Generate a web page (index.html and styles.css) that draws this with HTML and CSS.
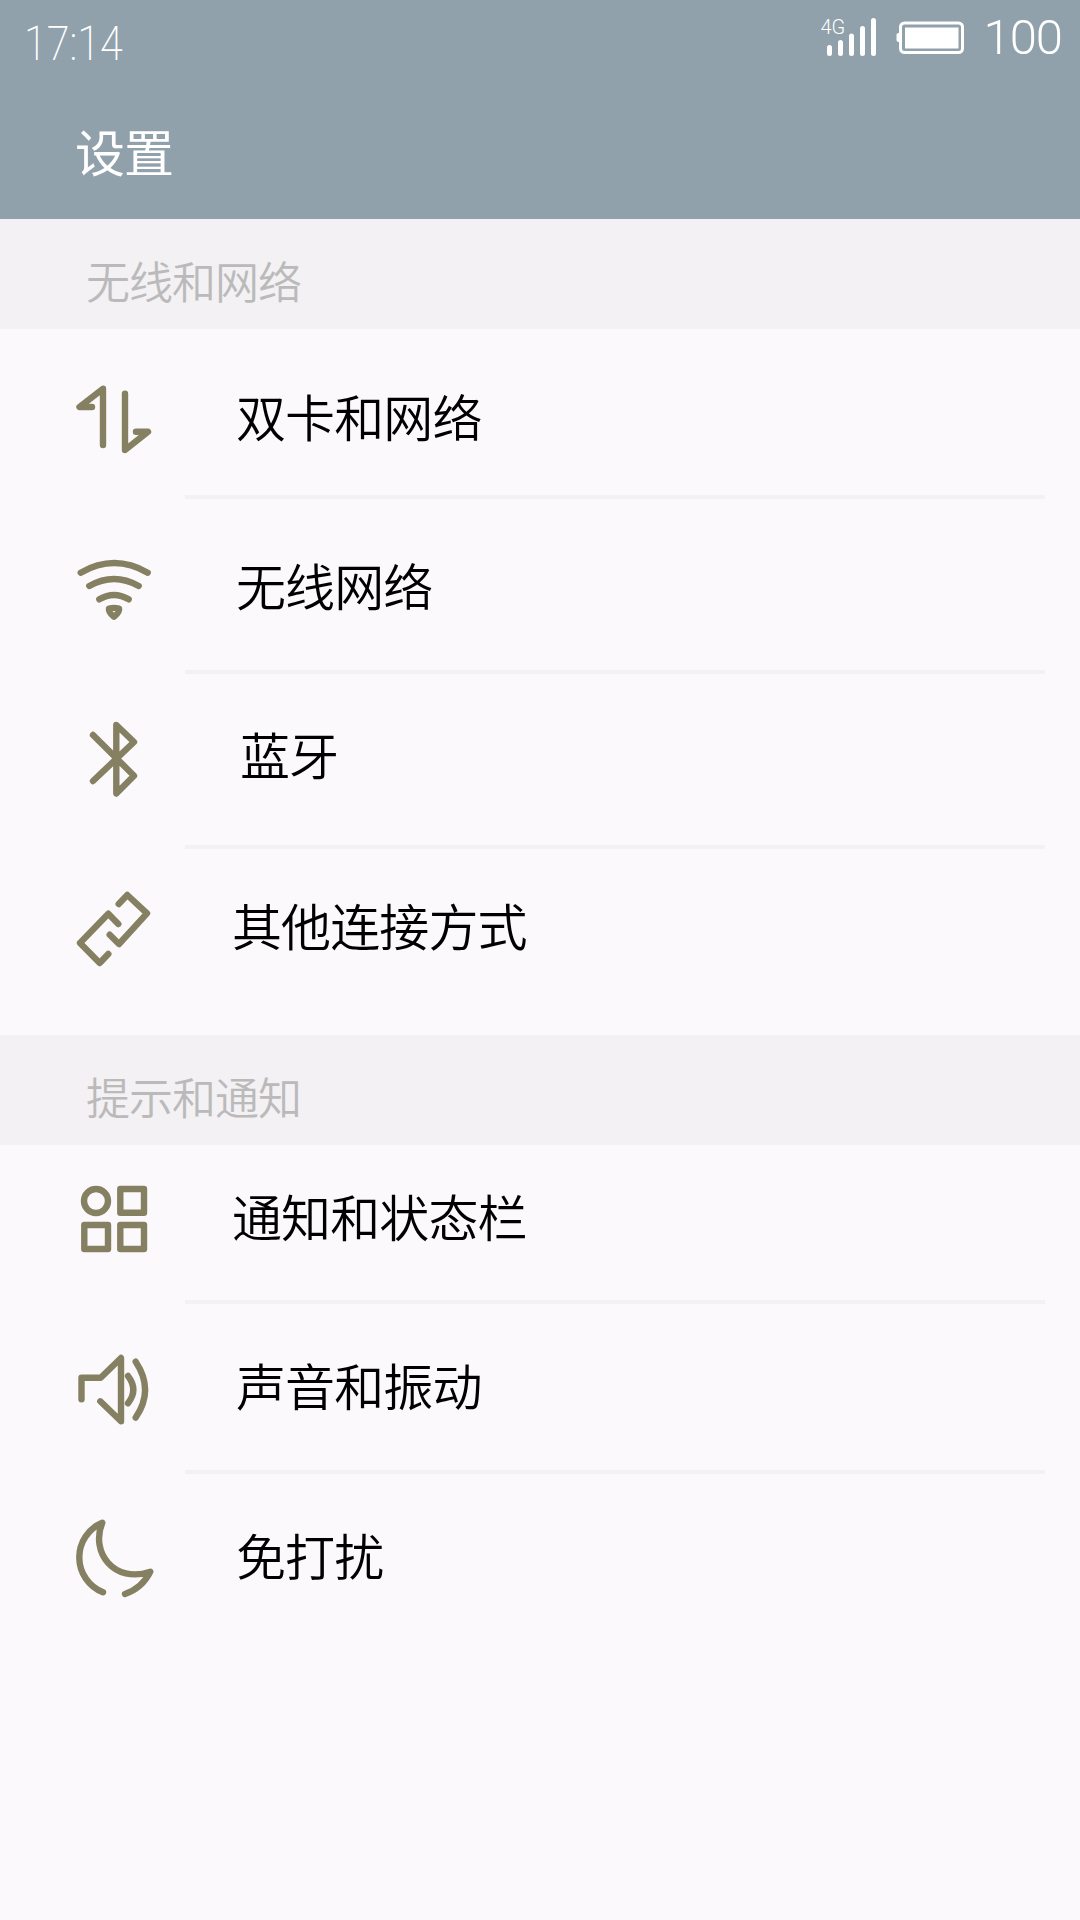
FILE: index.html
```html
<!DOCTYPE html>
<html lang="zh-CN">
<head>
  <meta charset="UTF-8">
  <meta name="viewport" content="width=device-width, initial-scale=1.0">
  <title>设置</title>
  <link rel="stylesheet" href="styles.css">
</head>
<body>
  <header class="header">
    <div class="status-bar">
      <span class="time">17:14</span>
      <div class="status-right">
        <div class="signal">
          <span class="network">4G</span>
          <svg width="60" height="40" viewBox="0 0 60 40" fill="none" stroke="currentColor" stroke-width="5" stroke-linecap="round">
            <path d="M9.5 31.5v6M20.5 26.5v11M31.5 20v17.5M42.5 12.5v25M53.5 4.5v33"/>
          </svg>
        </div>
        <svg class="battery" width="70" height="34" viewBox="0 0 70 34">
          <rect x="4.5" y="2" width="62" height="29.5" rx="4" fill="none" stroke="currentColor" stroke-width="3"/>
          <rect x="9" y="6.5" width="53.500" height="21" fill="currentColor"/>
          <rect x="0.5" y="12" width="4" height="9" rx="2" fill="currentColor"/>
        </svg>
        <span class="percent">100</span>
      </div>
    </div>
    <h1 class="title">设置</h1>
  </header>

  <main>
    <h2 class="section-title">无线和网络</h2>
    <ul class="settings-section wireless">
      <li class="setting-item">
        <svg class="icon" viewBox="0 0 80 80">
          <path d="M29 68V11.7L5.5 30H18M51 16.7V73L74 54.7H62"/>
        </svg>
        <span class="setting-label">双卡和网络</span>
      </li>
      <li class="setting-item">
        <svg class="icon" viewBox="0 0 80 80">
          <path d="M6.7 26.7Q40.3 7.5 73.7 26.7M15.3 40Q40 26 64.7 40M25.3 53.3Q40 44.5 54.7 53.3"/>
          <path d="M35 62.5Q40 61.3 45 62.5Q46 66 40 70.8Q34 66 35 62.5z"/>
        </svg>
        <span class="setting-label">无线网络</span>
      </li>
      <li class="setting-item bluetooth">
        <svg class="icon" viewBox="0 0 80 80">
          <path d="M19 20L60 60.700L42.300 78.500V10L60 27L19 66"/>
        </svg>
        <span class="setting-label">蓝牙</span>
      </li>
      <li class="setting-item wide">
        <svg class="icon" viewBox="0 0 80 80">
          <path d="M44.700 18L53.300 9L73 27.300L45 58L35.700 48.700"/>
          <path d="M44.300 38L34.300 27.700L6 57L25.700 77L34.300 68"/>
        </svg>
        <span class="setting-label">其他连接方式</span>
      </li>
    </ul>

    <h2 class="section-title">提示和通知</h2>
    <ul class="settings-section notice">
      <li class="setting-item wide">
        <svg class="icon" viewBox="0 0 80 80">
          <circle cx="22" cy="24" r="12"/>
          <rect x="46.300" y="12" width="23.700" height="23.700"/>
          <rect x="10.300" y="48" width="23.700" height="24"/>
          <rect x="46.300" y="48" width="23.700" height="24"/>
        </svg>
        <span class="setting-label">通知和状态栏</span>
      </li>
      <li class="setting-item">
        <svg class="icon" viewBox="0 0 80 80">
          <path d="M7.500 53.300V31.700H26.700L47 12V75.300L26.300 55.300"/>
          <path d="M54 30Q64.600 43.700 54 57.300M61.700 15.700Q80.500 44 61.700 71.500"/>
        </svg>
        <span class="setting-label">声音和振动</span>
      </li>
      <li class="setting-item">
        <svg class="icon" viewBox="0 0 80 80">
          <path d="M29 76.300A37.600 37.600 0 0 1 28.300 6.700C16 36 40 68 76.300 55.700Q68.400 72 51 78"/>
        </svg>
        <span class="setting-label">免打扰</span>
      </li>
    </ul>
  </main>
</body>
</html>
```
FILE: styles.css
```css
:root {
  --header-color: #91A1AB;
  --background-color: #FBF9FC;
  --section-color: #F3F1F4;
  --icon-color: #868063;
  --text-primary: #000000;
  --text-secondary: #BBBABB;
}

* {
  box-sizing: border-box;
  margin: 0;
  padding: 0;
}

body {
  min-height: 1920px;
  font-family: "Noto Sans CJK SC", sans-serif;
  background-color: var(--background-color);
  color: var(--text-primary);
}

.header {
  height: 219px;
  background-color: var(--header-color);
  color: #FFFFFF;
}

.status-bar {
  display: flex;
  justify-content: space-between;
  height: 110px;
  padding: 16px 18px 0 24px;
  font-family: Roboto, sans-serif;
  font-weight: 300;
  line-height: 44px;
}

.time {
  padding-top: 6px;
  font-size: 48px;
  font-weight: 200;
  transform: scaleX(0.86);
  transform-origin: left;
}

.status-right {
  display: flex;
  align-items: flex-start;
}

.signal {
  position: relative;
  height: 40px;
  margin-right: 16px;
}

.signal svg {
  display: block;
}

.network {
  position: absolute;
  top: 1px;
  left: 0;
  font-size: 20px;
  line-height: 20px;
}

.battery {
  margin-top: 5px;
}

.percent {
  margin-left: 17px;
  font-size: 49px;
  letter-spacing: -1px;
}

.title {
  padding-left: 75px;
  font-size: 50px;
  font-weight: 400;
  line-height: 81px;
  letter-spacing: -1px;
}

.section-title {
  height: 110px;
  padding-left: 86px;
  background-color: var(--section-color);
  font-size: 44px;
  font-weight: 350;
  line-height: 123px;
  letter-spacing: -1px;
  color: var(--text-secondary);
}

.settings-section {
  list-style: none;
}

.setting-item {
  display: flex;
  height: 170px;
  padding: 42px 0 0 74px;
  /* 分割线从图标右侧开始 */
  background: linear-gradient(var(--section-color), var(--section-color)) 185px 100% / 860px 4px no-repeat;
}

.setting-item:last-child {
  background: none;
}

.wireless .setting-item {
  height: 175px;
}

.wireless .setting-item:nth-child(1) {
  height: 170px;
  padding-top: 48px;
}

.wireless .setting-item:nth-child(2) {
  padding-top: 47px;
}

.wireless .setting-item:nth-child(3) {
  padding-top: 41px;
}

.wireless .setting-item:nth-child(4) {
  height: 186px;
  padding-top: 37px;
}

.notice .setting-item:first-child {
  height: 159px;
  padding-top: 32px;
}

.icon {
  flex: none;
  width: 80px;
  height: 80px;
  overflow: visible;
  fill: none;
  stroke: var(--icon-color);
  stroke-width: 6.4;
  stroke-linecap: round;
  stroke-linejoin: round;
}

.setting-label {
  margin-left: 82px;
  font-size: 50px;
  font-weight: 350;
  line-height: 76px;
  letter-spacing: -0.9px;
}

.bluetooth .setting-label {
  margin-left: 86px;
}

.wide .setting-label {
  margin-left: 78px;
}
```
